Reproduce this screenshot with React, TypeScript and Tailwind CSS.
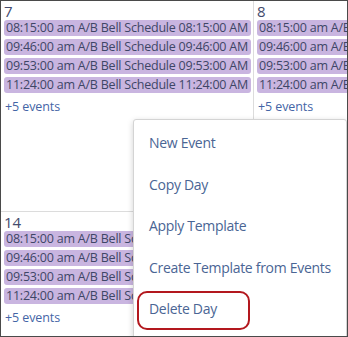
const events = [
  "08:15:00 am A/B Bell Schedule 08:15:00 AM",
  "09:46:00 am A/B Bell Schedule 09:46:00 AM",
  "09:53:00 am A/B Bell Schedule 09:53:00 AM",
  "11:24:00 am A/B Bell Schedule 11:24:00 AM",
];

const menuItems = ["New Event", "Copy Day", "Apply Template", "Create Template from Events", "Delete Day"];

function DayCell({ day }: { day: string }) {
  return (
    <div className="pt-[2px] pl-[3px] pr-[2px] overflow-hidden">
      <div className="text-[15px] leading-[17px] text-[#434a6c]">{day}</div>
      {events.map((e) => (
        <div
          key={e}
          className="h-[16px] mb-[3px] rounded-[3px] bg-[#c9b5e0] px-[2px] text-[12.5px] tracking-[-0.22px] leading-[16px] text-[#3e4666] whitespace-nowrap overflow-hidden"
        >
          {e}
        </div>
      ))}
      <div className="mt-[6px] pl-[1px] text-[12.5px] tracking-[-0.1px] leading-[16px] text-[#4465a6]">+5 events</div>
    </div>
  );
}

export default function App() {
  return (
    <div
      className="relative w-[348px] h-[337px] overflow-hidden bg-white border border-[#4a4a4a]"
      style={{ fontFamily: '"Open Sans", sans-serif' }}
    >
      <div className="grid grid-cols-[253px_1fr] grid-rows-[211px_1fr] h-full">
        <div className="border-r border-b border-[#dcdcdc]">
          <DayCell day="7" />
        </div>
        <div className="border-b border-[#dcdcdc]">
          <DayCell day="8" />
        </div>
        <div className="border-r border-[#dcdcdc]">
          <DayCell day="14" />
        </div>
        <div />
      </div>

      <div className="absolute left-[132px] top-[118px] w-[214px] h-[240px] bg-white border border-[#d4d4d4] rounded-[3px] shadow-[0_2px_6px_rgba(0,0,0,0.18)] pt-[2px]">
        {menuItems.map((m) => (
          <div
            key={m}
            className="h-[41.5px] flex items-center pl-[15px] text-[14px] tracking-[-0.3px] text-[#4a6594] whitespace-nowrap"
          >
            {m}
          </div>
        ))}
      </div>

      <div className="absolute left-[136px] top-[290px] w-[113px] h-[39px] border-2 border-[#b3181e] rounded-[10px]" />
    </div>
  );
}
